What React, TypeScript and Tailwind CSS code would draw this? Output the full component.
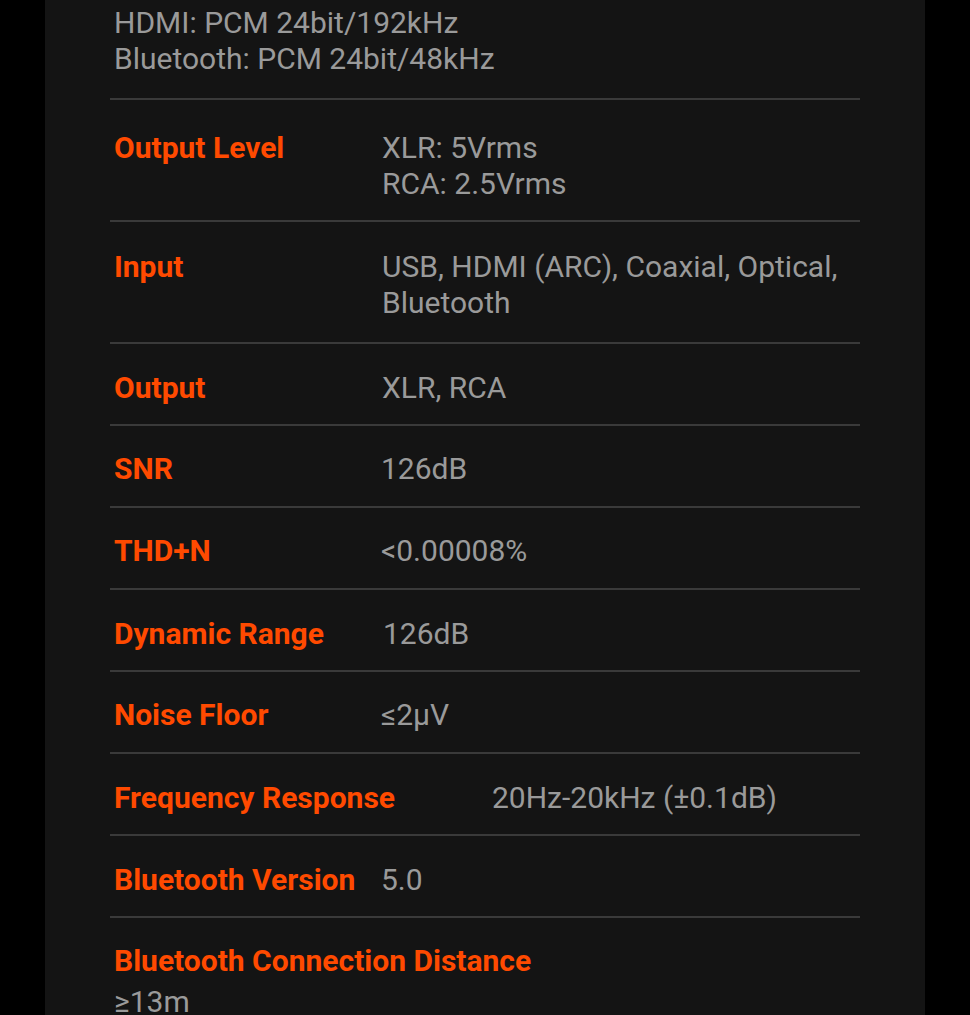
import React from "react";

type Row = {
  label: string;
  values: string[];
  labelW: string;
  pad: string;
};

const rows: Row[] = [
  { label: "Output Level", values: ["XLR: 5Vrms", "RCA: 2.5Vrms"], labelW: "w-[272px]", pad: "h-[122px] pt-[30px]" },
  { label: "Input", values: ["USB, HDMI (ARC), Coaxial, Optical,", "Bluetooth"], labelW: "w-[272px]", pad: "h-[122px] pt-[27px]" },
  { label: "Output", values: ["XLR, RCA"], labelW: "w-[272px]", pad: "h-[82px] pt-[26px]" },
  { label: "SNR", values: ["126dB"], labelW: "w-[271px]", pad: "h-[82px] pt-[25px]" },
  { label: "THD+N", values: ["<0.00008%"], labelW: "w-[271px]", pad: "h-[82px] pt-[25px]" },
  { label: "Dynamic Range", values: ["126dB"], labelW: "w-[273px]", pad: "h-[82px] pt-[26px]" },
  { label: "Noise Floor", values: ["≤2μV"], labelW: "w-[271px]", pad: "h-[82px] pt-[25px]" },
  { label: "Frequency Response", values: ["20Hz-20kHz (±0.1dB)"], labelW: "w-[382px]", pad: "h-[82px] pt-[26px]" },
  { label: "Bluetooth Version", values: ["5.0"], labelW: "w-[271px]", pad: "h-[82px] pt-[26px]" },
];

export default function App() {
  return (
    <div
      className="w-[970px] h-[1015px] bg-black overflow-hidden"
      style={{ fontFamily: "Roboto, 'Noto Sans', sans-serif" }}
    >
      <div className="ml-[45px] w-[880px] h-full bg-[#141414] pl-[65px]">
        <div className="w-[750px]">
          <div className="h-[98px] pt-[5px] pl-[4px] text-[30px] leading-[36px] text-[#9a9a9a]">
            <div>HDMI: PCM 24bit/192kHz</div>
            <div>Bluetooth: PCM 24bit/48kHz</div>
          </div>
          {rows.map((r) => (
            <div key={r.label} className={"flex border-t-2 border-[#3a3a3a] " + r.pad}>
              <div
                className={
                  r.labelW +
                  " shrink-0 pl-[4px] text-[30px] leading-[36px] font-bold text-[#ff4a00]"
                }
              >
                {r.label}
              </div>
              <div className="text-[30px] leading-[36px] text-[#9a9a9a]">
                {r.values.map((v) => (
                  <div key={v}>{v}</div>
                ))}
              </div>
            </div>
          ))}
          <div className="border-t-2 border-[#3a3a3a] pt-[25px] pl-[4px]">
            <div className="text-[30px] leading-[36px] font-bold text-[#ff4a00]">
              Bluetooth Connection Distance
            </div>
            <div className="mt-[5px] text-[30px] leading-[36px] text-[#9a9a9a]">≥13m</div>
          </div>
        </div>
      </div>
    </div>
  );
}
